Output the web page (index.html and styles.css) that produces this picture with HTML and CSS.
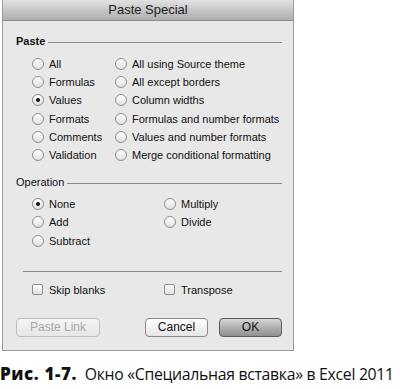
FILE: index.html
```html
<!DOCTYPE html>
<html lang="en">
<head>
    <meta charset="UTF-8">
    <title>Paste Special</title>
    <link rel="stylesheet" href="styles.css">
</head>
<body>
    <div class="dialog">
        <div class="titlebar">Paste Special</div>
        <div class="content">
            <!-- Paste section -->
            <div class="section-head"><span>Paste</span><div class="rule"></div></div>
            <div class="options paste-options">
                <div class="opt"><span class="radio"></span>All</div>
                <div class="opt"><span class="radio"></span>All using Source theme</div>
                <div class="opt"><span class="radio"></span>Formulas</div>
                <div class="opt"><span class="radio"></span>All except borders</div>
                <div class="opt"><span class="radio checked"></span>Values</div>
                <div class="opt"><span class="radio"></span>Column widths</div>
                <div class="opt"><span class="radio"></span>Formats</div>
                <div class="opt"><span class="radio"></span>Formulas and number formats</div>
                <div class="opt"><span class="radio"></span>Comments</div>
                <div class="opt"><span class="radio"></span>Values and number formats</div>
                <div class="opt"><span class="radio"></span>Validation</div>
                <div class="opt"><span class="radio"></span>Merge conditional formatting</div>
            </div>

            <!-- Operation section -->
            <div class="section-head op-head"><span class="light">Operation</span><div class="rule"></div></div>
            <div class="options op-options">
                <div class="opt"><span class="radio checked"></span>None</div>
                <div class="opt"><span class="radio"></span>Multiply</div>
                <div class="opt"><span class="radio"></span>Add</div>
                <div class="opt"><span class="radio"></span>Divide</div>
                <div class="opt"><span class="radio"></span>Subtract</div>
            </div>

            <div class="separator"></div>

            <div class="options checks">
                <div class="opt"><span class="checkbox"></span>Skip blanks</div>
                <div class="opt"><span class="checkbox"></span>Transpose</div>
            </div>

            <div class="buttons">
                <button type="button" class="btn disabled">Paste Link</button>
                <div class="btn-group">
                    <button type="button" class="btn">Cancel</button>
                    <button type="button" class="btn default">OK</button>
                </div>
            </div>
        </div>
    </div>
    <p class="caption"><b>Рис. 1-7.</b>&nbsp; Окно «Специальная вставка» в Excel 2011</p>
</body>
</html>
```

FILE: styles.css
```css
/* General reset */
* {
    margin: 0;
    padding: 0;
    box-sizing: border-box;
}

body {
    background-color: #ffffff;
    font-family: "Liberation Sans", Arial, sans-serif;
    color: #111;
}

/* Dialog window */
.dialog {
    width: 292px;
    margin-left: 2px;
    background-color: #e8e8e8;
    border: 1px solid #9a9a9a;
    border-top: none;
    padding-bottom: 13px;
}

.titlebar {
    height: 21px;
    line-height: 20px;
    text-align: center;
    font-size: 13px;
    color: #222;
    background: linear-gradient(#e2e2e2, #adadad);
    border-bottom: 1px solid #8c8c8c;
}

.content {
    padding: 13px 11px 0 13px;
    font-size: 11px;
}

/* Section headers with a rule */
.section-head {
    display: flex;
    align-items: center;
    height: 14px;
    gap: 3px;
    font-weight: bold;
}

.section-head .light {
    font-weight: normal;
}

.section-head .rule {
    flex: 1;
    height: 1px;
    margin-top: 3px;
    background-color: #8a8a8a;
}

.op-head {
    margin-top: 11px;
}

/* Radio / checkbox grids */
.options {
    display: grid;
    grid-auto-rows: 18.2px;
    margin-top: 7px;
    margin-left: 16px;
}

.paste-options {
    grid-template-columns: 83px 1fr;
}

.op-options {
    grid-template-columns: 132px 1fr;
    margin-top: 6px;
}

.checks {
    grid-template-columns: 132px 1fr;
    margin-top: 9px;
}

.opt {
    display: flex;
    align-items: center;
    white-space: nowrap;
}

.radio {
    width: 12px;
    height: 12px;
    margin-right: 5px;
    border-radius: 50%;
    border: 1px solid #8e8e8e;
    background: linear-gradient(#ffffff, #e0e0e0);
    display: flex;
    align-items: center;
    justify-content: center;
}

.radio.checked::after {
    content: "";
    width: 4px;
    height: 4px;
    border-radius: 50%;
    background-color: #111;
}

.checkbox {
    width: 11px;
    height: 11px;
    margin-right: 6px;
    border-radius: 2px;
    border: 1px solid #8e8e8e;
    background: linear-gradient(#ffffff, #e0e0e0);
}

.separator {
    height: 1px;
    margin: 21px 0 0 7px;
    background-color: #8a8a8a;
}

/* Bottom buttons */
.buttons {
    display: flex;
    justify-content: space-between;
    margin-top: 19px;
}

.btn-group {
    display: flex;
    gap: 11px;
}

.btn {
    height: 19px;
    width: 63px;
    font-family: "Liberation Sans", Arial, sans-serif;
    font-size: 12px;
    color: #111;
    background: linear-gradient(#ffffff, #e4e4e4);
    border: 1px solid #8a8a8a;
    border-radius: 4px;
}

.btn.disabled {
    width: 84px;
    color: #a8a8a8;
    border-color: #bdbdbd;
    background: linear-gradient(#f4f4f4, #e6e6e6);
}

.btn.default {
    background: linear-gradient(#d4d4d4, #8e8e8e);
    border-color: #5c5c5c;
}

/* Figure caption */
.caption {
    margin-top: 11px;
    font-family: "Open Sans", Arial, sans-serif;
    font-size: 15.8px;
    letter-spacing: -0.3px;
    color: #111;
    white-space: nowrap;
}

.caption b {
    font-size: 17px;
    font-weight: 800;
    letter-spacing: 0.6px;
}
```
